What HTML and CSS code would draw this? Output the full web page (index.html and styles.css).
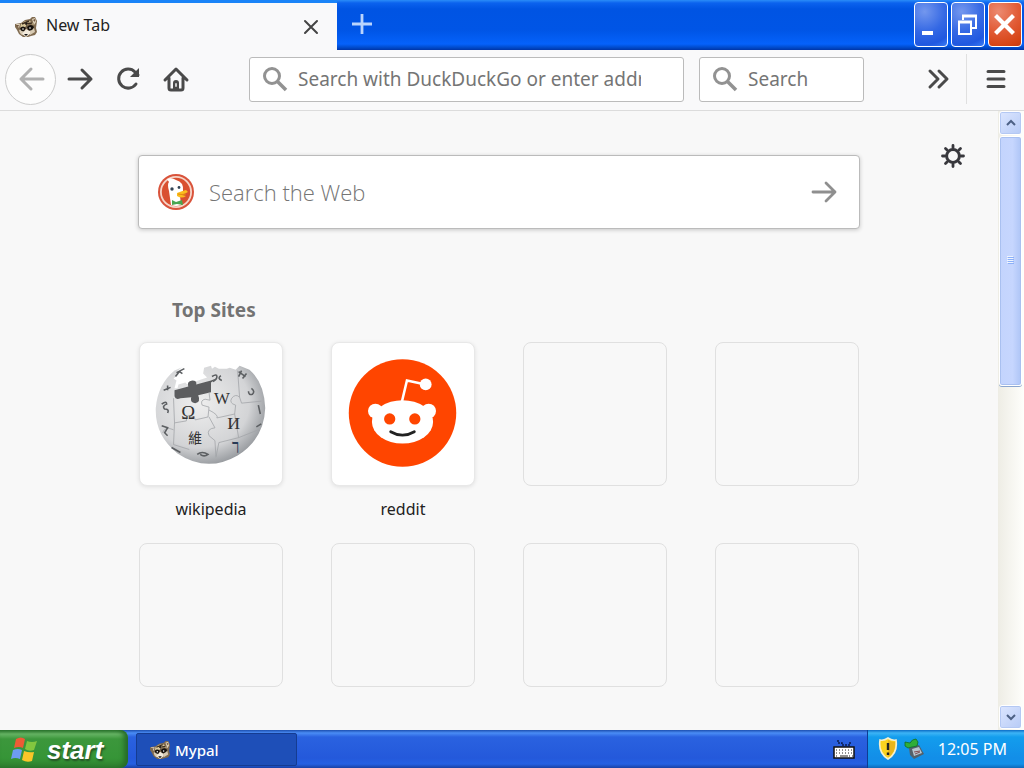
FILE: index.html
```html
<!DOCTYPE html>
<html lang="en">
<head>
<meta charset="utf-8">
<meta name="viewport" content="width=device-width, initial-scale=1">
<title>New Tab</title>
<link rel="stylesheet" href="styles.css">
</head>
<body>
<svg class="symbols" aria-hidden="true">
  <symbol id="raccoon" viewBox="0 0 24 22">
    <path d="M1 8l6-1 4-3 5-1 2-2 3 0 2 4-1 7 1 4-2 3-4 1-3 1-5 0-4-3-2-4-2-3z" fill="#806b50"/>
    <path d="M2 8l4 0-1 4zM18 3l3-1 1 4-2 3z" fill="#ded1b8"/>
    <path d="M2 9l3 0-1 2zM19 4l2-1 0 3z" fill="#70543f"/>
    <path d="M7 8q4-4 9-3l4 4q-4-2-7 0l-3 3-4 1z" fill="#d9c79a"/>
    <path d="M8 8l7-3M11 8l7-1" stroke="#3c2d20" stroke-width="1.400"/>
    <path d="M5 14l3-1 3 4-3 2-2-2zM16 14l4-2 1 4-5 3z" fill="#d8cbb4"/>
    <path d="M8 18l4-5 4 2 0 3-4 3z" fill="#f2eadc"/>
    <path d="M6 12q3-3 6 0l-2 3q-3 1-4-3zM13 11q4-4 7 0-2 5-6 3z" fill="#15100c"/>
    <path d="M10 18h4l-2 2zM12 7l1-1-1 6z" fill="#111"/>
    <circle cx="9" cy="13" r=".8" fill="#fff"/><circle cx="16" cy="12" r=".8" fill="#fff"/>
  </symbol>
  <symbol id="lens" viewBox="0 0 26 26">
    <g fill="none" stroke="#929292"><circle cx="10" cy="10" r="7.500" stroke-width="3"/><path d="M15.500 15.500l8.500 8.500" stroke-width="3.600"/></g>
  </symbol>
</svg>

<header class="titlebar">
  <div class="tab">
    <svg class="tab-icon"><use href="#raccoon"/></svg>
    <span class="tab-title">New Tab</span>
    <button class="tab-close" aria-label="Close tab"><svg width="16" height="16" viewBox="0 0 16 16"><path d="M2 2l12 12M14 2L2 14" stroke="#444" stroke-width="2" stroke-linecap="round"/></svg></button>
  </div>
  <button class="tab-new" aria-label="New tab"><svg width="22" height="22" viewBox="0 0 22 22"><path d="M11 1v20M1 11h20" stroke="#b9d4fd" stroke-width="2.800"/></svg></button>
  <div class="window-buttons">
    <button class="window-button" aria-label="Minimize"><svg viewBox="0 0 34 44"><path d="M8 30h11" stroke="#fff" stroke-width="4"/></svg></button>
    <button class="window-button" aria-label="Restore"><svg viewBox="0 0 34 44"><g fill="none" stroke="#fff"><path d="M12 17v-4h13v12h-5" stroke-width="2"/><path d="M11 13h15" stroke-width="3"/><path d="M8 19v12h12V19" stroke-width="2"/><path d="M7 19h14" stroke-width="3"/></g></svg></button>
    <button class="window-button window-close" aria-label="Close"><svg viewBox="0 0 34 44"><path d="M9 14l15 15M24 14L9 29" stroke="#fff" stroke-width="4.200" stroke-linecap="square"/></svg></button>
  </div>
</header>

<nav class="toolbar">
  <button class="tool tool-back" aria-label="Back"><svg width="30" height="30" viewBox="0 0 30 30"><path d="M27 15H5M15 5L5 15l10 10"/></svg></button>
  <button class="tool" aria-label="Forward"><svg width="30" height="30" viewBox="0 0 30 30"><path d="M4 15h22M17 6l9 9-9 9"/></svg></button>
  <button class="tool" aria-label="Reload"><svg width="30" height="30" viewBox="0 0 30 30"><path d="M23 20a9.500 9.500 0 1 1-1-12l3 3"/><path class="solid" d="M26 4v9h-9z"/></svg></button>
  <button class="tool" aria-label="Home"><svg width="30" height="30" viewBox="0 0 30 30"><path d="M4 16L15 5l11 11M8 14v10q0 2 2 2h10q2 0 2-2V14"/><path class="solid" d="M12 26v-7q0-3 3-3t3 3v7z"/><path class="knob" d="M15 20v2"/></svg></button>
  <label class="field field-url"><svg class="lens"><use href="#lens"/></svg><input type="text" aria-label="Address" placeholder="Search with DuckDuckGo or enter address"></label>
  <label class="field field-search"><svg class="lens"><use href="#lens"/></svg><input type="text" aria-label="Search" placeholder="Search"></label>
  <button class="tool tool-more" aria-label="More tools"><svg width="30" height="30" viewBox="0 0 30 30"><path d="M7 7l8 8-8 8M16 7l8 8-8 8"/></svg></button>
  <div class="menu-area"><button class="tool" aria-label="Open menu"><svg width="30" height="30" viewBox="0 0 30 30"><path d="M7 7.500h16M7 15h16M7 22.500h16"/></svg></button></div>
</nav>

<div class="viewport">
  <main class="page">
    <button class="settings" aria-label="Customize this page"><svg width="26" height="26" viewBox="0 0 26 26"><g fill="none" stroke="#38383d" stroke-width="3" stroke-linecap="round"><circle cx="13" cy="13" r="6.400"/><path d="M13 5V2.500M13 21v2.500M5 13H2.500M21 13h2.500M7.300 7.300L5.500 5.500M18.700 7.300l1.800-1.800M7.300 18.700l-1.800 1.800M18.700 18.700l1.800 1.800" stroke-width="2.800"/></g></svg></button>
    <div class="content">
      <form class="web-search">
        <svg class="duck" viewBox="0 0 36 36"><circle cx="18" cy="18" r="18" fill="#d9533b"/><circle cx="18" cy="18" r="16" fill="#f6d5c8"/><circle cx="18" cy="18" r="14.200" fill="#d95030"/><path d="M13 31L11 17q-2-7 0-9l-2-3q5-2 9 1 8 2 7 11l-3 5 1 9q-5 2-10 0z" fill="#fff"/><path d="M19 19q5-2 9-3l2 2-6 3 4 1q-4 3-9 0z" fill="#fbbd1d"/><path d="M20 20q4 1 8 0" stroke="#e48a13" fill="none"/><circle cx="14" cy="15" r="1.700" fill="#345"/><circle cx="21" cy="13.500" r="1.400" fill="#345"/><path d="M14 26l4 2 6-2 1 5-6-1-5 1z" fill="#4aa651"/></svg>
        <input type="text" aria-label="Search the Web" placeholder="Search the Web">
        <button class="go" type="button" aria-label="Submit search"><svg width="28" height="26" viewBox="0 0 28 26"><path d="M3 13h22M16 4l9 9-9 9" fill="none" stroke="#8f8f8f" stroke-width="2.800" stroke-linecap="round" stroke-linejoin="round"/></svg></button>
      </form>
      <section class="sites">
        <h1 class="sites-title">Top Sites</h1>
        <div class="grid">
          <a class="site" href="#wikipedia">
            <span class="tile tile-filled">
              <svg viewBox="0 0 144 144">
                <defs><radialGradient id="globe" cx=".4" cy=".38" r=".7"><stop offset="0" stop-color="#eee"/><stop offset=".65" stop-color="#d3d4d6"/><stop offset="1" stop-color="#85898e"/></radialGradient></defs>
                <path d="M44 24l-9 4q-17 14-19 38-1 28 22 46 30 20 61 2 27-17 28-48-1-26-16-39l-10-4-4 4-6-2-3 1-8 0-4-2-3 2-1-3-7 2-1 6 4 4-12 4-2 5-5-1-3-3-7 2-1 4h-3l2-8-3-2 5-4-2-3 5-4z" fill="url(#globe)"/>
                <path d="M35 48l14-4q-2-5 4-6 5 0 4 4l15-4 5-2-2 2-3 2v10l-13 3q3 7-3 8-6-1-4-6l-11 1q-5 2-6-2z" fill="#5c5d5f"/>
                <g fill="none" stroke="#a2a5a8" stroke-width=".8"><path d="M34 56l1 25 12-2q0-7 5-5 4 0 4 4l13-3 1-10-7-2q-2-5 3-6l5 1-1-8M70 68q10 5 8 8l18-4 1-9q-7-2-4-7 4-5 8-1l2 6 20-2M35 81l-1 22 16 5M70 75l6 11q-9 1-6 8l6 5 1 16M34 88q-9-4-11 3M96 72l4 24-20 5-3 15M100 96l20-8M54 103q1-8-5-8M99 28l2 27"/></g>
                <g fill="#333" font-family="Liberation Serif, serif" text-anchor="middle">
                  <text x="49" y="77" font-size="19">Ω</text><text x="83" y="62" font-size="17">W</text><text x="95" y="87" font-size="18">И</text>
                  <text class="cjk" x="56" y="101" font-size="14">維</text><text x="97" y="109" font-size="15" font-weight="bold" fill="#283a55">ך</text>
                </g>
                <g fill="none" stroke="#5c5f62" stroke-width="1.600"><path d="M37 30l8-4M36 34l4-5 3 2M24 48l7-3M28 43v5M22 62q5-4 5 0-5 2-2 5 5 0 3 4M22 84l6 2-3 5 3 3M73 34q5-3 5 0t-4 5M82 33q-4 3 1 5M100 29l7 5M103 28l-3 6M104 36l4-5M113 46q4 3 1 6-4 1-4-3M120 63l2 9M118 85l5-3M58 113q5-4 11 0-4 3-8 0M32 106l9 5"/></g>
              </svg>
            </span>
            <span class="site-name">wikipedia</span>
          </a>
          <a class="site" href="#reddit">
            <span class="tile tile-filled">
              <svg viewBox="0 0 144 144"><circle cx="71.500" cy="71" r="54.500" fill="#ff4500"/><g fill="#fff"><circle cx="44" cy="69" r="7.500"/><circle cx="98" cy="69" r="7.500"/><ellipse cx="71.500" cy="80" rx="31" ry="22"/><circle cx="95" cy="42" r="6"/></g><path d="M71 59l5-21 19 4" fill="none" stroke="#fff" stroke-width="2.600"/><circle cx="58.500" cy="77" r="5.700" fill="#ff4500"/><circle cx="84" cy="77" r="5.700" fill="#ff4500"/><path d="M59.500 90q12 7 24 0" fill="none" stroke="#222" stroke-width="2.800" stroke-linecap="round"/></svg>
            </span>
            <span class="site-name">reddit</span>
          </a>
          <div class="site"><span class="tile"></span></div>
          <div class="site"><span class="tile"></span></div>
          <div class="site"><span class="tile"></span></div>
          <div class="site"><span class="tile"></span></div>
          <div class="site"><span class="tile"></span></div>
          <div class="site"><span class="tile"></span></div>
        </div>
      </section>
    </div>
  </main>
  <div class="scrollbar">
    <button class="scroll-button" aria-label="Scroll up"><svg width="10" height="8" viewBox="0 0 10 8"><path d="M1 6l4-4 4 4" fill="none" stroke="#4d6185" stroke-width="2"/></svg></button>
    <div class="scroll-track"><div class="scroll-thumb"><svg width="7" height="9" viewBox="0 0 7 9" shape-rendering="crispEdges"><path d="M0 0h6v1H0zM0 2h6v1H0zM0 4h6v1H0zM0 6h6v1H0z" fill="#eef4fe"/><path d="M1 1h6v1H1zM1 3h6v1H1zM1 5h6v1H1zM1 7h6v1H1z" fill="#8cb0f8"/></svg></div></div>
    <button class="scroll-button" aria-label="Scroll down"><svg width="10" height="8" viewBox="0 0 10 8"><path d="M1 2l4 4 4-4" fill="none" stroke="#4d6185" stroke-width="2"/></svg></button>
  </div>
</div>

<footer class="taskbar">
  <button class="start">
    <svg width="29" height="27" viewBox="0 0 29 27"><path d="M6 2q5-3 9 0l-2 9q-4-2-9 0z" fill="#ee5b35"/><path d="M17 4q5 2 10 0l-3 9q-5 2-9-1z" fill="#83c63f"/><path d="M3 13q5-2 9 0l-2 9q-5-2-9 0z" fill="#6d9cf3"/><path d="M14 14q5 2 10 1l-2 9q-5 2-10-1z" fill="#fbc628"/></svg>
    <span>start</span>
  </button>
  <button class="task"><svg class="task-icon"><use href="#raccoon"/></svg><span>Mypal</span></button>
  <svg class="keyboard" width="22" height="22" viewBox="0 0 22 22"><path d="M5 2v3h4v2h8V4" fill="none" stroke="#0a1c50" stroke-width="1.500" stroke-dasharray="2 1"/><path d="M1 9h20v11H1z" fill="#fff" stroke="#111" stroke-width="1.500"/><path d="M3 12h17M3 15h17M3 18h3M16 18h4" stroke="#222" stroke-width="1.200" stroke-dasharray="1 2"/><path d="M7 18h8" stroke="#222"/></svg>
  <div class="tray">
    <svg width="20" height="24" viewBox="0 0 20 24"><path d="M10 1q4 3 8 2 2 13-8 19Q0 16 2 3q4 1 8-2z" fill="#fbd21f" stroke="#f4efcf" stroke-width="1.600"/><path d="M10 3q3 2 7 2 1 11-7 15z" fill="#e9b51c"/><path d="M10 6v7M10 15.500v2.500" stroke="#222" stroke-width="2.400"/></svg>
    <svg width="22" height="22" viewBox="0 0 22 22"><path d="M5 10l10-3 5 9-10 5-4-4z" fill="#53606a"/><path d="M8 11l7-2 3 6-8 3z" fill="#b9c5cf"/><path d="M10 14l6-1M11 16l5-2" stroke="#824d52"/><path d="M1 4l5 1q2-4 6-4l2 3-1 4-5 1-4 1-3-2z" fill="#2fae38" stroke="#136d24" stroke-width=".8"/></svg>
    <time class="clock">12:05 PM</time>
  </div>
</footer>
</body>
</html>
```
FILE: styles.css
```css
* { box-sizing: border-box; }

body {
  margin: 0;
  height: 100vh;
  display: flex;
  flex-direction: column;
  overflow: hidden;
  background: #f8f8f8;
  color: #222;
  font-family: "Noto Sans", "Open Sans", sans-serif;
  font-size: 16px;
}

button {
  border: 0;
  padding: 0;
  background: none;
  color: inherit;
  font: inherit;
  display: flex;
  align-items: center;
  justify-content: center;
}

input {
  border: 0;
  padding: 0;
  min-width: 0;
  flex: 1;
  outline: 0;
  background: none;
  font: inherit;
  color: #333;
}

input::placeholder { color: #757575; opacity: 1; }
svg { flex: none; }
.symbols { display: none; }

.titlebar {
  display: flex;
  height: 50px;
  flex: none;
  background: linear-gradient(#2a8cf8 0, #0b62ee 3px, #0054e3 9px, #0055e6 30px, #0562fb 44px, #0047c4 48px, #0034a8 50px);
}

.tab {
  width: 337px;
  display: flex;
  align-items: center;
  padding: 0 16px 0 14px;
  gap: 8px;
  border-top: 3px solid #1a84f8;
  background: #f9f9fa;
}

.tab-icon { width: 24px; height: 22px; }
.tab-title { flex: 1; line-height: 24px; padding-bottom: 4px; }
.tab-close { width: 20px; height: 24px; }
.tab-new { width: 50px; height: 48px; }

.window-buttons { display: flex; gap: 3px; margin-left: auto; padding: 2px 2px 3px 0; }

.window-button {
  width: 34px;
  border: 1px solid #fff;
  border-radius: 4px;
  background: radial-gradient(circle at 30% 20%, #7397ee, #3468e4 50%, #2058e0 80%, #3b7df5);
}

.window-button svg { width: 34px; height: 44px; }
.window-close { background: radial-gradient(circle at 30% 20%, #ec8a70, #e15a34 50%, #d54314 85%, #c33b12); }

.toolbar {
  height: 61px;
  flex: none;
  display: flex;
  align-items: center;
  padding: 0 0 2px 5px;
  border-bottom: 1px solid #dcdcdc;
  background: #f9f9fa;
}

.tool { width: 48px; height: 48px; flex: none; }
.tool path { fill: none; stroke: #4a4a4a; stroke-width: 3; stroke-linecap: round; stroke-linejoin: round; }
.tool .solid { fill: #4a4a4a; stroke: none; }
.tool .knob { stroke: #ccc; stroke-width: 2; }
.tool-back { width: 51px; height: 51px; border: 1px solid #ccc; border-radius: 50%; background: #fdfdfd; }
.tool-back path { stroke: #b0b0b0; }

.field {
  height: 45px;
  display: flex;
  align-items: center;
  gap: 10px;
  padding-left: 12px;
  background: #fff;
  border: 1px solid #bbb;
  border-radius: 3px;
  font-size: 19px;
}

.field-url { flex: 1; margin-left: 49px; padding-right: 42px; }
.field-search { width: 165px; margin-left: 15px; padding-right: 12px; }
.lens { width: 26px; height: 26px; }
.tool-more { margin-left: 50px; }
.menu-area { margin-left: 4px; height: 50px; padding: 0 4px 0 5px; border-left: 1px solid #e0e0e0; display: flex; align-items: center; }

.viewport { flex: 1; min-height: 0; display: flex; }

.page { flex: 1; position: relative; overflow: hidden; padding: 44px 0 0; }
.settings { position: absolute; top: 32px; right: 32px; }
.content { max-width: 722px; margin: 0 auto; }

.web-search {
  height: 74px;
  display: flex;
  align-items: center;
  gap: 15px;
  padding: 0 21px 0 19px;
  border: 1px solid #bbb;
  border-radius: 4px;
  background: #fff;
  box-shadow: 0 1px 4px rgba(0, 0, 0, .2);
  font-family: "Open Sans", "Noto Sans", sans-serif;
  font-size: 22px;
  font-weight: 300;
}

.duck { width: 36px; height: 36px; }

.sites { padding: 67px 1px 0; }
.sites-title { margin: 0 0 18px; padding-left: 33px; font-size: 19px; line-height: 28px; font-weight: 700; color: #737373; }
.grid { display: grid; grid-template-columns: repeat(4, 144px); justify-content: space-between; row-gap: 21px; }
.site { height: 180px; color: #222; text-decoration: none; display: flex; flex-direction: column; gap: 10px; text-align: center; }
.tile { height: 144px; flex: none; border: 1px solid #e0e0e0; border-radius: 8px; overflow: hidden; }
.tile-filled { background: #fff; border-color: #e8e8e8; box-shadow: 0 1px 4px rgba(0, 0, 0, .1); }
.tile svg { display: block; width: 100%; height: 100%; }
.site-name { line-height: 26px; }
.cjk { font-family: "Noto Sans CJK TC", sans-serif; }

.scrollbar { width: 26px; flex: none; display: flex; flex-direction: column; gap: 1px; padding: 0 2px 1px 1px; background: linear-gradient(90deg, #eeede5, #fefefb); }
.scroll-button { height: 24px; flex: none; border: 1px solid #fff; border-radius: 3px; background: linear-gradient(135deg, #dce6ff, #b7cbf6); box-shadow: inset 0 0 0 1px #b4c8f3; }
.scroll-track { flex: 1; }
.scroll-thumb { height: 44%; display: flex; align-items: center; justify-content: center; border: 1px solid #fff; border-radius: 3px; background: linear-gradient(90deg, #c3d4fd, #c6d6fe 60%, #aec5f6); box-shadow: inset 0 0 0 1px #a9c0f0, 0 1px 0 #8ba6cf; }

.taskbar {
  height: 38px;
  flex: none;
  display: flex;
  align-items: center;
  color: #fff;
  background: linear-gradient(#1c4fb0 0, #4a8df5 3px, #2a62e0 7px, #2459db 28px, #2560e2 34px, #1941a5 38px);
}

.start {
  width: 128px;
  height: 38px;
  justify-content: flex-start;
  gap: 8px;
  padding: 3px 0 0 10px;
  border-radius: 0 8px 8px 0;
  background: linear-gradient(#2f7c31 0, #67b565 4px, #3c973c 9px, #369537 28px, #2e7f2e 38px);
  box-shadow: inset -4px 0 5px #266b29;
  font: italic 700 26px "Liberation Sans", sans-serif;
  text-shadow: 1px 2px 2px #245025;
}

.task {
  width: 161px;
  height: 33px;
  margin-left: 8px;
  justify-content: flex-start;
  gap: 4px;
  padding: 2px 0 0 12px;
  border: 1px solid #153c91;
  border-radius: 2px;
  background: #1e4fb8;
  font-size: 15px;
  font-weight: 500;
}

.task-icon { width: 22px; height: 20px; }
.keyboard { margin-left: auto; margin-right: 12px; }

.tray {
  height: 38px;
  display: flex;
  align-items: center;
  gap: 6px;
  padding: 0 17px 0 10px;
  border-left: 1px solid #0d3d93;
  background: linear-gradient(#0c6cc5 0, #3cb4f6 3px, #139ded 7px, #128ee8 28px, #1290e9 34px, #0e68b8 38px);
}

.clock { padding-left: 6px; }
```
